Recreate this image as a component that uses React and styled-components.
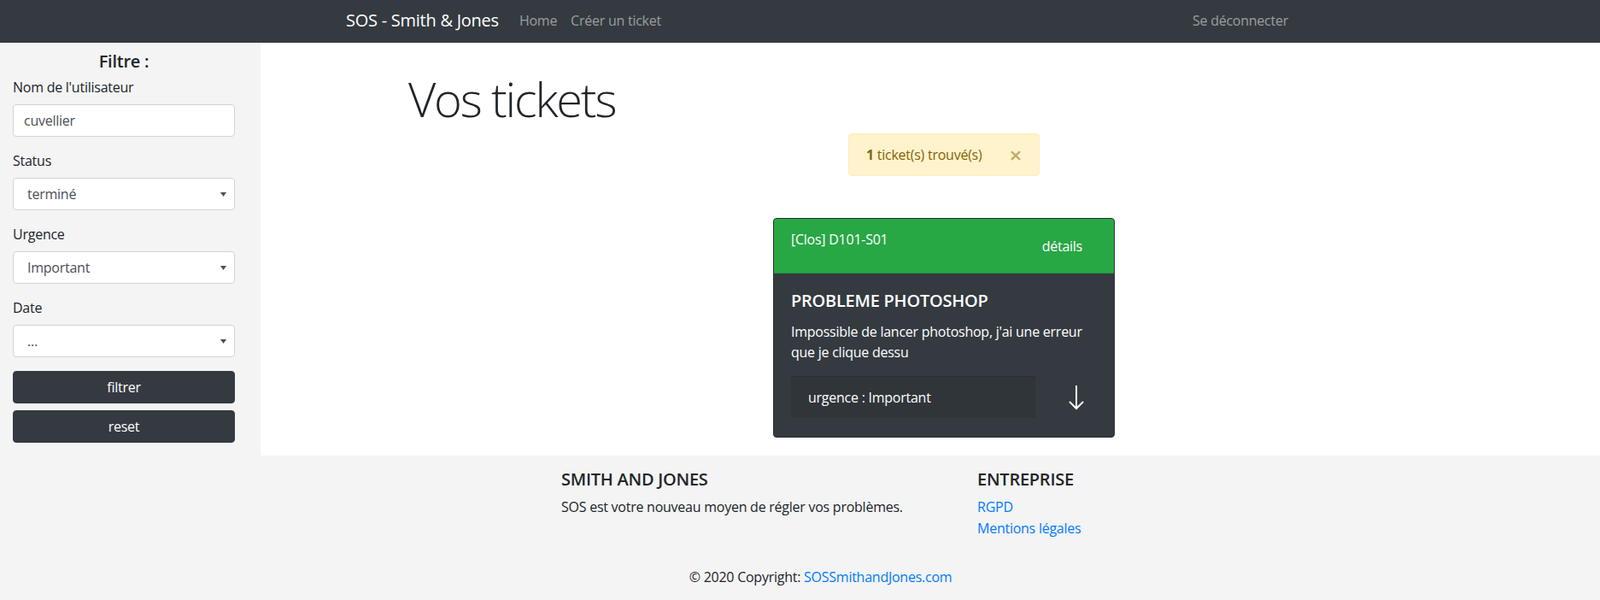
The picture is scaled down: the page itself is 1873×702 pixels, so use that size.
import React from "react";
import styled, { createGlobalStyle } from "styled-components";

const GlobalStyle = createGlobalStyle`
  html, body { margin: 0; padding: 0; background: #fff; }
  body {
    font-family: "Open Sans", "Noto Sans", "Liberation Sans", sans-serif;
    font-size: 16px;
    line-height: 1.5;
    letter-spacing: -0.25px;
    color: #212529;
  }
  * { box-sizing: border-box; }
`;

const Page = styled.div`
  width: 1873px;
  display: flex;
  flex-direction: column;
`;

const Navbar = styled.nav`
  height: 50px;
  background: #343a40;
  display: flex;
  align-items: center;
  padding: 0 357px 3px 405px;
`;

const Brand = styled.a`
  color: #fff;
  font-size: 20px;
  line-height: 30px;
  margin-right: 16px;
  text-decoration: none;
  white-space: nowrap;
`;

const NavLink = styled.a`
  color: rgba(255, 255, 255, 0.5);
  font-size: 16px;
  line-height: 24px;
  padding: 0 8px;
  text-decoration: none;
  white-space: nowrap;
  margin-left: ${(p) => (p.$push ? "auto" : "0")};
`;

const Body = styled.div`
  display: flex;
  align-items: stretch;
`;

const Sidebar = styled.aside`
  width: 305px;
  flex: none;
  background: #f4f4f4;
  padding: 10px 30px 7px 15px;
`;

const FilterTitle = styled.h4`
  margin: 0 0 6px;
  font-size: 20px;
  font-weight: 600;
  line-height: 24px;
  text-align: center;
`;

const FieldGroup = styled.div`
  margin-bottom: 16px;
`;

const Label = styled.label`
  display: block;
  margin-bottom: 8px;
  line-height: 24px;
`;

const TextInput = styled.input`
  display: block;
  width: 100%;
  height: 38px;
  padding: 6px 12px;
  font: inherit;
  font-size: 16px;
  letter-spacing: -0.25px;
  color: #495057;
  background: #fff;
  border: 1px solid #ced4da;
  border-radius: 4px;
  outline: none;
`;

const FakeSelect = styled.div`
  display: flex;
  align-items: center;
  justify-content: space-between;
  height: 38px;
  padding: 0 9px 0 16px;
  color: #495057;
  background: #fff;
  border: 1px solid #ced4da;
  border-radius: 4px;
  line-height: 24px;
`;

const ActionButton = styled.button`
  display: block;
  width: 100%;
  height: 38px;
  margin-bottom: 8px;
  background: #343a40;
  color: #fff;
  border: 1px solid #343a40;
  border-radius: 4px;
  font: inherit;
  font-size: 16px;
  line-height: 24px;
  letter-spacing: -0.25px;
  cursor: pointer;
`;

const Main = styled.main`
  flex: 1;
  display: flex;
  flex-direction: column;
  padding: 32px 0 21px 32px;
`;

const PageTitle = styled.h1`
  align-self: flex-start;
  margin: 0 0 0 141px;
  font-size: 56px;
  font-weight: 300;
  line-height: 1.2;
  letter-spacing: -2.2px;
  color: #212529;
`;

const Alert = styled.div`
  align-self: center;
  margin-top: 7px;
  display: flex;
  align-items: center;
  background: #fff3cd;
  border: 1px solid #ffeeba;
  color: #856404;
  border-radius: 4px;
  padding: 12px 20px;
  line-height: 24px;
`;

const Close = styled.span`
  margin-left: 32px;
  font-size: 26px;
  font-weight: 600;
  line-height: 24px;
  color: #856404;
  opacity: 0.5;
`;

const Card = styled.div`
  align-self: center;
  margin-top: 49px;
  width: 400px;
  background: #343a40;
  border: 1px solid #2b3035;
  border-radius: 4px;
  overflow: hidden;
  color: #fff;
`;

const CardHeader = styled.div`
  display: flex;
  justify-content: space-between;
  align-items: flex-start;
  background: #28a745;
  padding: 12px 20px;
  border-bottom: 1px solid rgba(0, 0, 0, 0.125);
  line-height: 24px;
`;

const DetailsButton = styled.span`
  padding: 8px 17px 7px 12px;
  line-height: 24px;
`;

const CardBody = styled.div`
  padding: 20px 20px 22px;
`;

const CardTitle = styled.h5`
  margin: 0 0 12px;
  font-size: 20px;
  font-weight: 600;
  line-height: 1.2;
`;

const CardText = styled.p`
  margin: 0 0 16px;
  line-height: 24px;
`;

const UrgencyRow = styled.div`
  display: flex;
  align-items: center;
`;

const UrgencyBox = styled.div`
  width: 286px;
  height: 49px;
  display: flex;
  align-items: center;
  padding: 0 20px;
  background: #30353a;
  border-top: 1px solid #2a2e33;
`;

const ArrowIcon = styled.svg`
  margin-left: 39px;
  flex: none;
`;

const Footer = styled.footer`
  background: #f4f4f4;
  padding-top: 16px;
`;

const FooterCols = styled.div`
  display: flex;
  padding-left: 657px;
  margin-bottom: 16px;
`;

const FooterCol = styled.div`
  width: ${(p) => p.$w || "auto"};
`;

const FooterHeading = styled.h5`
  margin: 0 0 8px;
  font-size: 20px;
  font-weight: 600;
  line-height: 24px;
  text-transform: uppercase;
`;

const FooterText = styled.p`
  margin: 0;
  line-height: 24px;
`;

const LinkList = styled.ul`
  list-style: none;
  margin: 0;
  padding: 0;
`;

const LinkItem = styled.li`
  line-height: 24px;
  margin-bottom: 1px;
`;

const Link = styled.a`
  color: #007bff;
  text-decoration: none;
`;

const Copyright = styled.div`
  padding: 16px 0 15px 48px;
  text-align: center;
  line-height: 24px;
`;

const Caret = () => (
  <svg width="7" height="5" viewBox="0 0 7 5">
    <path d="M0 0 L7 0 L3.5 5 Z" fill="#495057" />
  </svg>
);

const Select = ({ value }) => (
  <FakeSelect role="combobox">
    <span>{value}</span>
    <Caret />
  </FakeSelect>
);

export default function App() {
  return (
    <Page>
      <GlobalStyle />
      <Navbar>
        <Brand href="#">SOS - Smith &amp; Jones</Brand>
        <NavLink href="#">Home</NavLink>
        <NavLink href="#">Créer un ticket</NavLink>
        <NavLink href="#" $push>
          Se déconnecter
        </NavLink>
      </Navbar>
      <Body>
        <Sidebar>
          <FilterTitle>Filtre :</FilterTitle>
          <FieldGroup>
            <Label>Nom de l'utilisateur</Label>
            <TextInput defaultValue="cuvellier" />
          </FieldGroup>
          <FieldGroup>
            <Label>Status</Label>
            <Select value="terminé" />
          </FieldGroup>
          <FieldGroup>
            <Label>Urgence</Label>
            <Select value="Important" />
          </FieldGroup>
          <FieldGroup>
            <Label>Date</Label>
            <Select value="..." />
          </FieldGroup>
          <ActionButton>filtrer</ActionButton>
          <ActionButton>reset</ActionButton>
        </Sidebar>
        <Main>
          <PageTitle>Vos tickets</PageTitle>
          <Alert>
            <span>
              <strong>1</strong> ticket(s) trouvé(s)
            </span>
            <Close>×</Close>
          </Alert>
          <Card>
            <CardHeader>
              <span>[Clos] D101-S01</span>
              <DetailsButton>détails</DetailsButton>
            </CardHeader>
            <CardBody>
              <CardTitle>PROBLEME PHOTOSHOP</CardTitle>
              <CardText>
                Impossible de lancer photoshop, j'ai une erreur que je clique dessu
              </CardText>
              <UrgencyRow>
                <UrgencyBox>urgence : Important</UrgencyBox>
                <ArrowIcon width="18" height="30" viewBox="0 0 18 30">
                  <path
                    d="M9 1 V28 M1 20 L9 28 L17 20"
                    fill="none"
                    stroke="#fff"
                    strokeWidth="2"
                  />
                </ArrowIcon>
              </UrgencyRow>
            </CardBody>
          </Card>
        </Main>
      </Body>
      <Footer>
        <FooterCols>
          <FooterCol $w="487px">
            <FooterHeading>Smith and Jones</FooterHeading>
            <FooterText>SOS est votre nouveau moyen de régler vos problèmes.</FooterText>
          </FooterCol>
          <FooterCol>
            <FooterHeading>Entreprise</FooterHeading>
            <LinkList>
              <LinkItem>
                <Link href="#">RGPD</Link>
              </LinkItem>
              <LinkItem>
                <Link href="#">Mentions légales</Link>
              </LinkItem>
            </LinkList>
          </FooterCol>
        </FooterCols>
        <Copyright>
          © 2020 Copyright: <Link href="#">SOSSmithandJones.com</Link>
        </Copyright>
      </Footer>
    </Page>
  );
}
